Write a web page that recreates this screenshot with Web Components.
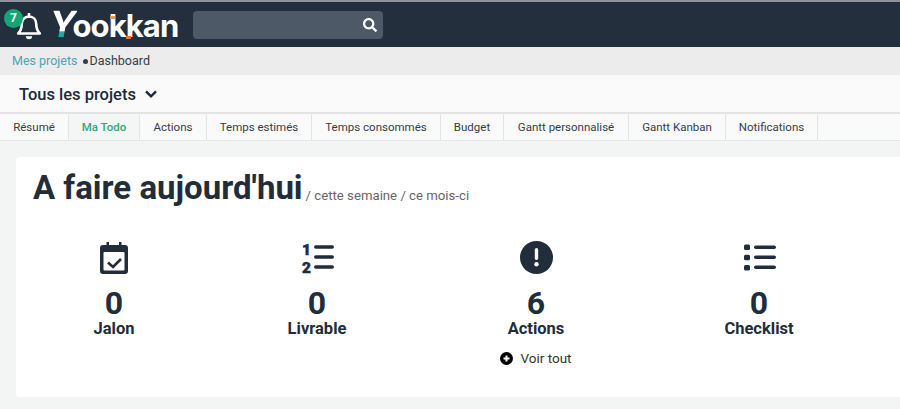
<!DOCTYPE html>
<html lang="fr">
<head>
<meta charset="utf-8">
<title>Yookkan</title>
<style>
    html, body {
        margin: 0;
        height: 409px;
        overflow: hidden;
        background-color: #f3f4f4;
        font-family: Roboto, "Liberation Sans", sans-serif;
        color: #212d3a;
    }
</style>
</head>
<body>
<app-header count="7"></app-header>
<bread-crumb></bread-crumb>
<project-bar>Tous les projets</project-bar>
<tab-bar>
    <tab-item w="69">Résumé</tab-item>
    <tab-item w="71" active>Ma Todo</tab-item>
    <tab-item w="67">Actions</tab-item>
    <tab-item w="105">Temps estimés</tab-item>
    <tab-item w="129">Temps consommés</tab-item>
    <tab-item w="63">Budget</tab-item>
    <tab-item w="125">Gantt personnalisé</tab-item>
    <tab-item w="97">Gantt Kanban</tab-item>
    <tab-item w="92">Notifications</tab-item>
</tab-bar>
<todo-panel>
    <stat-block value="0" label="Jalon" icon="calendar"></stat-block>
    <stat-block value="0" label="Livrable" icon="ordered"></stat-block>
    <stat-block value="6" label="Actions" icon="alert" more></stat-block>
    <stat-block value="0" label="Checklist" icon="list"></stat-block>
</todo-panel>

<script>
class AppHeader extends HTMLElement {
    constructor() {
        super();
        this.myRoot = this.attachShadow({ mode: "open" });
        this.myRoot.innerHTML = `
        <style>
            :host {
                display: flex;
                align-items: center;
                height: 45px;
                border-top: 2px solid #8d949b;
                background-color: #232f3c;
                color: white;
            }
            .bell {
                position: relative;
                width: 46px;
                height: 45px;
                flex: none;
            }
            .bell svg {
                position: absolute;
                left: 16px;
                top: 11px;
            }
            .badge {
                position: absolute;
                left: 4px;
                top: 7px;
                width: 19px;
                height: 19px;
                border-radius: 50%;
                background-color: #14a574;
                font: 700 12px/18px Roboto, sans-serif;
                text-align: center;
            }
            .logo {
                position: relative;
                margin-left: 4px;
                width: 143px;
                flex: none;
                font: 700 31px/45px Inter, sans-serif;
                letter-spacing: -0.9px;
                white-space: nowrap;
            }
            .logo b {
                display: inline-block;
                margin-right: -3px;
                font-size: 36px;
                font-weight: 700;
                color: transparent;
                background: linear-gradient(#fff 66%, #1fa9a6 66%);
                -webkit-background-clip: text;
                background-clip: text;
                transform: skewX(-10deg);
            }
            .logo i {
                position: absolute;
                width: 5px;
                height: 3px;
            }
            .logo .tan { left: 60px; top: 14px; background-color: #d9a25c; }
            .logo .orange { left: 76px; top: 34px; background-color: #e2763a; }
            .search {
                width: 190px;
                height: 28px;
                border-radius: 4px;
                background-color: #4d5967;
                display: flex;
                align-items: center;
                justify-content: flex-end;
                padding-right: 6px;
                box-sizing: border-box;
            }
        </style>
        <div class="bell">
            <svg width="26" height="27" viewBox="0 0 26 27" fill="none" stroke="#fff" stroke-width="2.600" stroke-linejoin="round">
                <path d="M13 3.500c-4.400 0-7.200 3.200-7.200 7.300 0 5.600-1.600 7.600-3.600 9.700h21.600c-2-2.100-3.600-4.100-3.600-9.700 0-4.100-2.800-7.300-7.200-7.300z"/>
                <path d="M13 .5v3" stroke-linecap="round"/>
                <path d="M9.800 23.200h6.400c0 1.800-1.400 3-3.200 3s-3.200-1.200-3.200-3z" fill="#fff" stroke="none"/>
            </svg>
            <span class="badge">${this.getAttribute("count")}</span>
        </div>
        <div class="logo"><b>Y</b>ookkan<i class="tan"></i><i class="orange"></i></div>
        <div class="search">
            <svg width="14" height="14" viewBox="0 0 512 512" fill="#fff"><path d="M505 442.700L405.300 343c-4.500-4.500-10.600-7-17-7H372c27.600-35.300 44-79.700 44-128C416 93.100 322.900 0 208 0S0 93.100 0 208s93.100 208 208 208c48.300 0 92.700-16.400 128-44v16.300c0 6.400 2.500 12.500 7 17l99.700 99.700c9.400 9.400 24.600 9.400 33.900 0l28.300-28.300c9.400-9.400 9.400-24.600.1-34zM208 336c-70.700 0-128-57.200-128-128 0-70.700 57.200-128 128-128 70.700 0 128 57.200 128 128 0 70.700-57.200 128-128 128z"/></svg>
        </div>
        `;
    }
}

class BreadCrumb extends HTMLElement {
    constructor() {
        super();
        this.myRoot = this.attachShadow({ mode: "open" });
        this.myRoot.innerHTML = `
        <style>
            :host {
                display: flex;
                align-items: center;
                height: 28px;
                padding-left: 12px;
                padding-bottom: 1px;
                box-sizing: border-box;
                background-color: #ececec;
                font-size: 12.5px;
                color: #333d48;
            }
            a { color: #4ba3b3; text-decoration: none; }
            i {
                width: 5px;
                height: 5px;
                border-radius: 50%;
                background-color: #333d48;
                margin: 2px 2px 0 5px;
            }
        </style>
        <a>Mes projets</a><i></i><span>Dashboard</span>
        `;
    }
}

class ProjectBar extends HTMLElement {
    constructor() {
        super();
        this.myRoot = this.attachShadow({ mode: "open" });
        this.myRoot.innerHTML = `
        <style>
            :host {
                display: flex;
                align-items: center;
                gap: 9px;
                height: 39px;
                padding: 1px 0 0 19px;
                box-sizing: border-box;
                background-color: #fafafa;
                border-bottom: 2px solid #e2e3e4;
                font-size: 16.5px;
                font-weight: 500;
                color: #1d2a38;
            }
        </style>
        <slot></slot>
        <svg width="12" height="8" viewBox="0 0 12 8" fill="none" stroke="#1d2a38" stroke-width="2.400"><path d="M1 1.300l5 5 5-5"/></svg>
        `;
    }
}

class TabBar extends HTMLElement {
    constructor() {
        super();
        this.myRoot = this.attachShadow({ mode: "open" });
        this.myRoot.innerHTML = `
        <style>
            :host {
                display: flex;
                height: 27px;
                box-sizing: border-box;
                background-color: #fafafa;
                border-bottom: 1px solid #e6e7e8;
            }
        </style>
        <slot></slot>
        `;
    }
}

class TabItem extends HTMLElement {
    constructor() {
        super();
        this.myRoot = this.attachShadow({ mode: "open" });
        this.myRoot.innerHTML = `
        <style>
            :host {
                display: flex;
                align-items: center;
                justify-content: center;
                box-sizing: border-box;
                padding-bottom: 1px;
                border-right: 1px solid #e3e4e5;
                font-size: 11.5px;
                color: #333d48;
                flex: none;
            }
            :host([active]) {
                background-color: #f4f5f5;
                color: #2fa87d;
                font-weight: 500;
            }
        </style>
        <slot></slot>
        `;
        this.style.width = this.getAttribute("w") + "px";
    }
}

class TodoPanel extends HTMLElement {
    constructor() {
        super();
        this.myRoot = this.attachShadow({ mode: "open" });
        this.myRoot.innerHTML = `
        <style>
            :host {
                display: block;
                margin: 16px 0 0 16px;
                height: 240px;
                background-color: #fff;
                border-radius: 4px 0 0 4px;
            }
            h1 {
                margin: 0;
                padding: 12px 0 0 17px;
                font-size: 33px;
                line-height: 37px;
                font-weight: 700;
                color: #212d3a;
            }
            small {
                font-size: 13.2px;
                font-weight: 400;
                color: #666;
                margin-left: 3px;
                vertical-align: -1px;
            }
            .stats {
                display: grid;
                grid-template-columns: 196px 210px 228px 218px;
                margin-top: 27px;
            }
        </style>
        <h1>A faire aujourd'hui<small>/ cette semaine / ce mois-ci</small></h1>
        <div class="stats"><slot></slot></div>
        `;
    }
}

const ICONS = {
    calendar: `<svg width="28" height="32" viewBox="0 0 28 32">
        <path fill="#212d3a" d="M6.500 0h2.500v3h10V0h2.500v3H25a3 3 0 0 1 3 3v23a3 3 0 0 1-3 3H3a3 3 0 0 1-3-3V6a3 3 0 0 1 3-3h3.500z"/>
        <rect x="3.500" y="10" width="21" height="18.500" rx="1" fill="#fff"/>
        <path fill="none" stroke="#212d3a" stroke-width="2.600" d="M8 20.500l5 4.500 8-8"/>
    </svg>`,
    ordered: `<svg width="32" height="31" viewBox="0 0 32 31" fill="#212d3a" stroke-linejoin="round" overflow="visible" style="margin-left:2px">
        <text x="0" y="12.500" font-family="Roboto" font-weight="900" font-size="15.400" stroke="#212d3a" stroke-width="0.500">1</text>
        <text x="0" y="30.500" font-family="Roboto" font-weight="900" font-size="15.400" stroke="#212d3a" stroke-width="0.500">2</text>
        <rect x="12" y="3.200" width="20" height="3.600" rx="1.800"/>
        <rect x="12" y="13.200" width="20" height="3.600" rx="1.800"/>
        <rect x="12" y="23.200" width="20" height="3.600" rx="1.800"/>
    </svg>`,
    alert: `<svg width="33" height="33" viewBox="0 0 33 33">
        <circle cx="16.500" cy="16.500" r="16.500" fill="#212d3a"/>
        <rect x="14.800" y="7" width="3.400" height="12" rx="1.700" fill="#fff"/>
        <circle cx="16.500" cy="23.300" r="2.200" fill="#fff"/>
    </svg>`,
    list: `<svg width="32" height="27" viewBox="0 0 32 27" fill="#212d3a" style="margin-left:2px">
        <rect x="0" y="0.500" width="6" height="5.400" rx="1.500"/>
        <rect x="0" y="10.800" width="6" height="5.400" rx="1.500"/>
        <rect x="0" y="21" width="6" height="5.400" rx="1.500"/>
        <rect x="10" y="1.400" width="22" height="3.600" rx="1.800"/>
        <rect x="10" y="11.400" width="22" height="3.600" rx="1.800"/>
        <rect x="10" y="21.400" width="22" height="3.600" rx="1.800"/>
    </svg>`
};

class StatBlock extends HTMLElement {
    constructor() {
        super();
        this.myRoot = this.attachShadow({ mode: "open" });
        const more = this.hasAttribute("more") ? `
            <div class="more">
                <svg width="13" height="13" viewBox="0 0 13 13"><circle cx="6.500" cy="6.500" r="6.500" fill="#000"/><path d="M6.500 3.500v6M3.500 6.500h6" stroke="#fff" stroke-width="2"/></svg>
                Voir tout
            </div>` : "";
        this.myRoot.innerHTML = `
        <style>
            :host {
                display: flex;
                flex-direction: column;
                align-items: center;
                color: #212d3a;
            }
            .icon {
                height: 33px;
                display: flex;
                align-items: center;
            }
            .value {
                font-size: 32px;
                line-height: 34px;
                font-weight: 700;
                margin-top: 12px;
            }
            .label {
                font-size: 16.5px;
                line-height: 18px;
                font-weight: 700;
            }
            .more {
                display: flex;
                align-items: center;
                gap: 7px;
                margin-top: 11px;
                font-size: 13.5px;
                line-height: 18px;
                color: #333;
            }
        </style>
        <div class="icon">${ICONS[this.getAttribute("icon")]}</div>
        <div class="value">${this.getAttribute("value")}</div>
        <div class="label">${this.getAttribute("label")}</div>
        ${more}
        `;
    }
}

window.customElements.define("app-header", AppHeader);
window.customElements.define("bread-crumb", BreadCrumb);
window.customElements.define("project-bar", ProjectBar);
window.customElements.define("tab-bar", TabBar);
window.customElements.define("tab-item", TabItem);
window.customElements.define("todo-panel", TodoPanel);
window.customElements.define("stat-block", StatBlock);
</script>
</body>
</html>
